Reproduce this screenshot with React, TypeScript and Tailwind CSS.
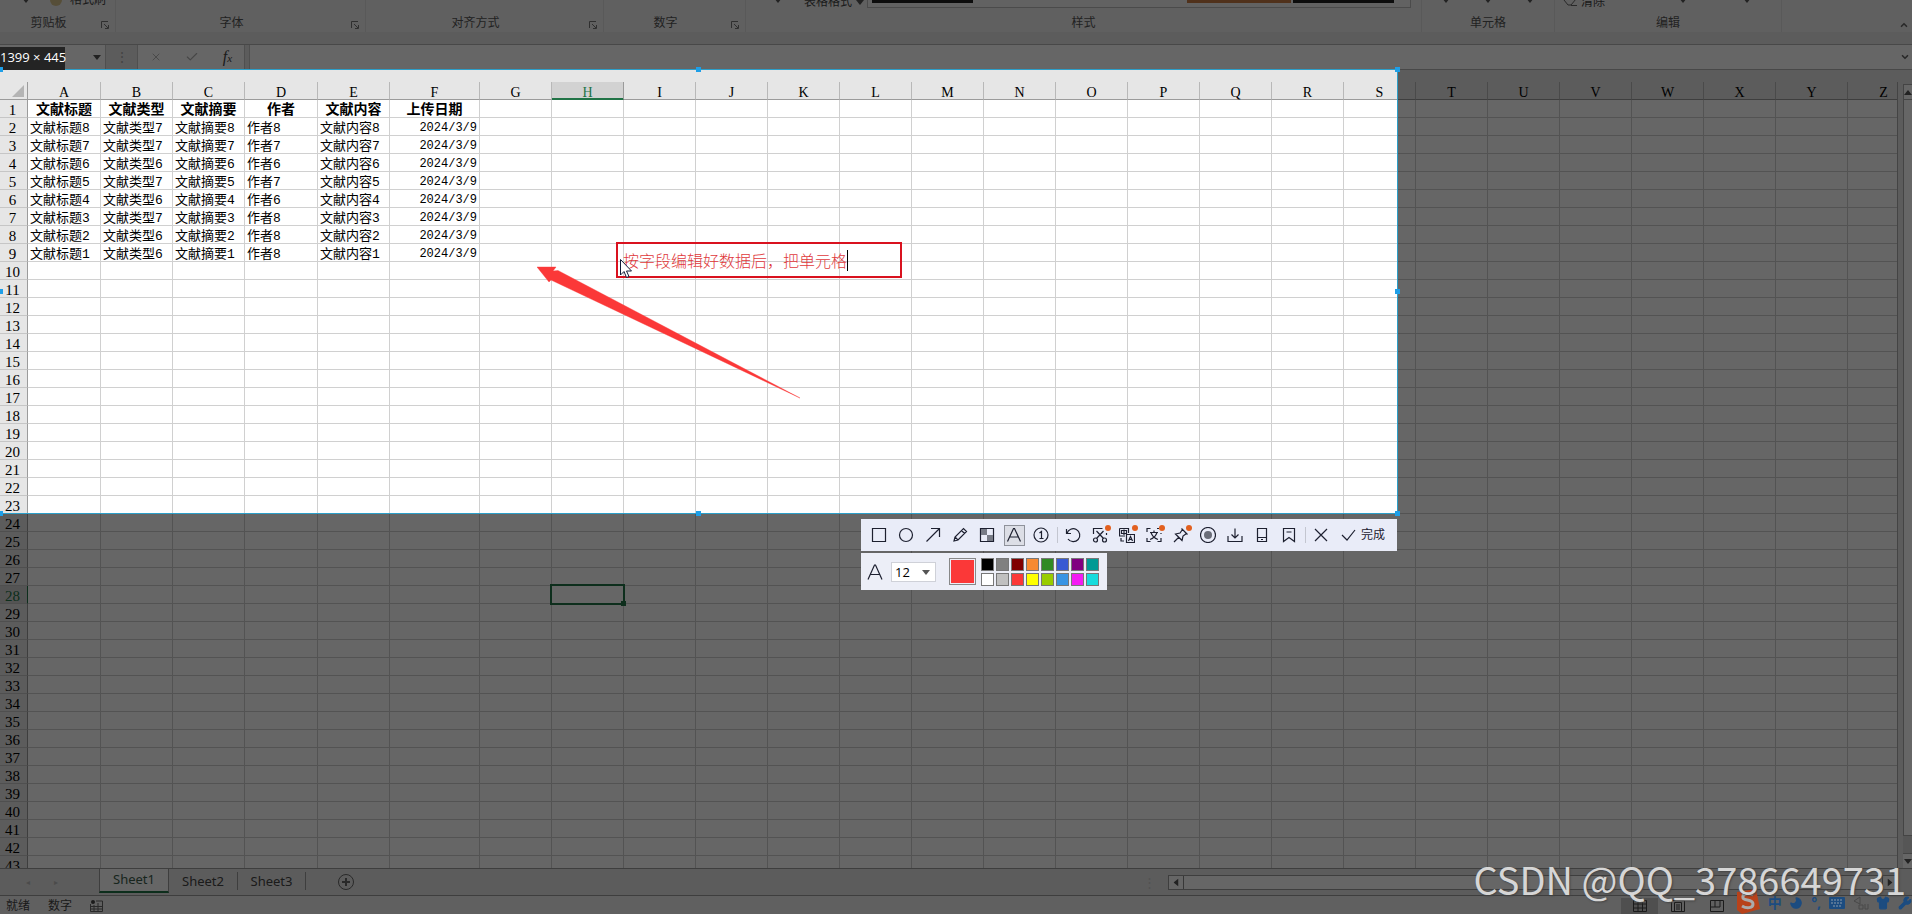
import type { ReactNode } from "react";
import { ChevronDown, ChevronUp, Check, Moon, Shirt, Wrench, X } from "lucide-react";

const columns = "ABCDEFGHIJKLMNOPQRSTUVWXYZ".split("");
const widths: Record<string, string> = { A: "w-[73px]", D: "w-[73px]", F: "w-[90px]" };

const fields = ["文献标题", "文献类型", "文献摘要", "作者", "文献内容", "上传日期"];
const records = [
  ["文献标题8", "文献类型7", "文献摘要8", "作者8", "文献内容8", "2024/3/9"],
  ["文献标题7", "文献类型7", "文献摘要7", "作者7", "文献内容7", "2024/3/9"],
  ["文献标题6", "文献类型6", "文献摘要6", "作者6", "文献内容6", "2024/3/9"],
  ["文献标题5", "文献类型7", "文献摘要5", "作者7", "文献内容5", "2024/3/9"],
  ["文献标题4", "文献类型6", "文献摘要4", "作者6", "文献内容4", "2024/3/9"],
  ["文献标题3", "文献类型7", "文献摘要3", "作者8", "文献内容3", "2024/3/9"],
  ["文献标题2", "文献类型6", "文献摘要2", "作者8", "文献内容2", "2024/3/9"],
  ["文献标题1", "文献类型6", "文献摘要1", "作者8", "文献内容1", "2024/3/9"],
];

const palette = [
  "bg-black", "bg-[#808080]", "bg-[#800000]", "bg-[#f78a32]", "bg-[#308a24]", "bg-[#385ad3]", "bg-[#800080]", "bg-[#009a94]",
  "bg-white", "bg-[#c0c0c0]", "bg-[#fb3838]", "bg-[#ffff00]", "bg-[#99cc00]", "bg-[#3894e4]", "bg-[#f31bf3]", "bg-[#16dcdd]",
];

const Caret = ({ className = "" }: { className?: string }) => (
  <svg viewBox="0 0 8 5" className={`h-[5px] w-2 shrink-0 ${className}`} fill="#555">
    <path d="M0 0h8L4 5z" />
  </svg>
);

function RibbonGroup({ label, className, launcher, children }: { label: string; className: string; launcher?: boolean; children?: ReactNode }) {
  return (
    <section className={`flex flex-col justify-end border-r border-[#dedede] ${className}`}>
      <div className="flex h-4 shrink-0 items-center text-xs leading-4">{children}</div>
      <div className="flex h-6 shrink-0 items-center pt-[6px] text-xs text-[#555]">
        <span className="flex-1 text-center">{label}</span>
        {launcher && (
          <button aria-label={`${label}设置`} className="w-[18px] pt-1 pl-1">
            <svg viewBox="0 0 8 8" className="size-2" fill="none" stroke="#777">
              <path d="M.5 7V.5H7M3 3l4 4M7.500 4v3.500H4" />
            </svg>
          </button>
        )}
      </div>
    </section>
  );
}

function Ribbon() {
  return (
    <header className="flex h-8 shrink-0 overflow-hidden bg-[#f0f0f0] text-[#444]">
      <RibbonGroup label="剪贴板" className="w-[116px]" launcher>
        <Caret className="ml-[22px]" />
        <span className="mr-2 ml-5 h-3 w-3 rounded-full bg-[#d8c48c]" />
        <button>格式刷</button>
      </RibbonGroup>
      <RibbonGroup label="字体" className="w-[250px]" launcher />
      <RibbonGroup label="对齐方式" className="w-[238px]" launcher />
      <RibbonGroup label="数字" className="w-[142px]" launcher />
      <RibbonGroup label="样式" className="min-w-0 flex-1">
        <Caret className="ml-7" />
        <button className="mr-[3px] ml-[22px] flex shrink-0 items-center gap-1 pt-1">
          表格格式
          <Caret />
        </button>
        <span className="mr-[10px] flex h-4 flex-1 items-center gap-[2px] border border-t-0 border-[#bcbcbc] bg-[#f4f4f4] px-1">
          <span className="h-[6px] w-[101px] bg-[#222]" />
          <span className="flex-1" />
          <span className="h-[6px] w-[104px] bg-[#c77b45]" />
          <span className="mr-3 h-[6px] w-[101px] bg-[#222]" />
        </span>
      </RibbonGroup>
      <RibbonGroup label="单元格" className="w-[133px]">
        <span className="flex gap-[34px] pl-5">
          <Caret /><Caret /><Caret />
        </span>
      </RibbonGroup>
      <RibbonGroup label="编辑" className="w-[227px]">
        <svg viewBox="0 0 14 10" className="mt-1 ml-2 h-[10px] w-[14px]" fill="none" stroke="#666">
          <path d="M1 3l4 5h3L13 2M8 8.500h6" />
        </svg>
        <button className="mr-[74px] ml-1 pt-1">清除</button>
        <Caret />
        <Caret className="ml-[56px]" />
      </RibbonGroup>
      <div className="flex w-[130px] items-end justify-end pr-[3px] pb-[2px]">
        <button aria-label="折叠功能区"><ChevronUp className="size-[10px]" strokeWidth={4} color="#666" /></button>
      </div>
    </header>
  );
}

function FormulaBar() {
  return (
    <div className="my-3 flex h-[26px] shrink-0 items-stretch border-y border-[#b4b4b4]">
      <label className="flex w-[106px] items-center border-r border-[#c6c6c6] bg-white pr-1">
        <input aria-label="名称框" className="w-0 flex-1 bg-transparent" />
        <Caret />
      </label>
      <span className="w-[31px] text-center text-sm leading-6 text-[#aaa]">⋮</span>
      <div className="flex w-[108px] items-center justify-around border-x border-[#c6c6c6] bg-white">
        <button aria-label="取消"><X className="size-3" color="#b8b8b8" /></button>
        <button aria-label="输入"><Check className="size-[14px]" color="#b0b0b0" /></button>
        <button aria-label="插入函数" className="font-['Liberation_Serif',serif] text-base leading-5 text-[#444] italic">
          f<span className="text-[11px]">x</span>
        </button>
      </div>
      <input aria-label="编辑栏" className="ml-1 min-w-0 flex-1 border-l border-[#c6c6c6] bg-white px-2" />
      <button aria-label="展开编辑栏" className="bg-white pr-[2px]"><ChevronDown className="size-[10px]" strokeWidth={4} color="#666" /></button>
    </div>
  );
}

function Sheet() {
  return (
    <div className="min-w-0 flex-1 overflow-hidden border-r border-[#ababab]">
      <table className="w-max table-fixed border-separate border-spacing-0 bg-white font-['Liberation_Mono','Noto_Sans_CJK_SC',monospace] text-[13px] text-black">
        <colgroup>
          <col className="w-7" />
          {columns.map((c) => <col key={c} className={widths[c] ?? "w-[72px]"} />)}
        </colgroup>
        <thead>
          <tr className="h-[18px] bg-[#e6e6e6] font-['Liberation_Serif',serif] text-sm leading-[13px]">
            <th className="border-r border-b border-[#9b9b9b] p-0">
              <svg viewBox="0 0 12 12" className="ml-3 size-3" fill="#b4b4b4"><path d="M12 0v12H0z" /></svg>
            </th>
            {columns.map((c) => (
              <th
                key={c}
                scope="col"
                className={`h-[18px] border-r border-b p-0 pt-1 font-normal ${c === "H" ? "border-r-[#9b9b9b] border-b-[#217346] bg-[#d2d2d2] text-[#217346] shadow-[inset_0_-1px_#217346]" : "border-r-[#b8b8b8] border-b-[#9b9b9b]"}`}
              >
                {c}
              </th>
            ))}
          </tr>
        </thead>
        <tbody>
          {Array.from({ length: 44 }, (_, i) => i + 1).map((row) => (
            <tr key={row} className="h-[18px]">
              <th
                scope="row"
                className={`h-[18px] border-r border-b border-b-[#c6c6c6] pt-1 pr-[2px] pb-0 pl-0 font-['Liberation_Serif',serif] text-[15px] leading-[13px] font-normal ${row === 28 ? "border-r-[#217346] bg-[#d2d2d2] text-[#217346]" : "border-r-[#9b9b9b] bg-[#e6e6e6]"}`}
              >
                {row}
              </th>
              {columns.map((c, i) => {
                const active = c === "H" && row === 28;
                const text = row === 1 ? fields[i] : records[row - 2]?.[i];
                const align = row === 1 ? "text-center text-sm leading-[13px] font-bold" : i === 5 ? "text-right text-xs leading-[13px]" : "text-left leading-[13px]";
                return (
                  <td
                    key={c}
                    className={`h-[18px] border-r border-b border-[#d0d0d0] px-[2px] pt-1 pb-0 whitespace-nowrap ${align} ${active ? "relative" : ""}`}
                  >
                    {text}
                    {active && (
                      <span className="absolute -inset-[2px] border-2 border-[#217346]">
                        <span className="absolute -right-[3px] -bottom-[3px] size-[5px] bg-[#217346]" />
                      </span>
                    )}
                  </td>
                );
              })}
            </tr>
          ))}
        </tbody>
      </table>
    </div>
  );
}

function VerticalScroll() {
  return (
    <div className="ml-[5px] flex w-[9px] shrink-0 flex-col overflow-hidden pt-[2px]">
      <button aria-label="向上滚动" className="flex h-4 items-center justify-center border border-r-0 border-[#ababab] bg-white">
        <Caret className="rotate-180" />
      </button>
      <span className="flex-1 border-l border-[#ababab] bg-white" />
      <span className="h-[19px] border-y border-[#ababab] bg-[#d8d8d8]" />
      <button aria-label="向下滚动" className="flex h-[14px] items-center justify-center bg-white"><Caret /></button>
    </div>
  );
}

function SheetTabs() {
  return (
    <nav className="flex h-7 shrink-0 items-start border-y border-[#9b9b9b] text-[13px] text-[#444]">
      <span className="flex w-[99px] gap-6 self-center pl-[26px] text-[8px] text-[#bbb]"><span>◂</span><span>▸</span></span>
      <button className="h-6 w-[70px] border-x border-b-2 border-x-[#9b9b9b] border-b-[#217346] bg-white text-[#3c5c4c]">Sheet1</button>
      <button className="my-[3px] h-[18px] w-[69px] border-r border-[#9b9b9b]">Sheet2</button>
      <button className="my-[3px] h-[18px] w-[68px] border-r border-[#9b9b9b]">Sheet3</button>
      <button aria-label="新工作表" className="mt-[5px] ml-8">
        <svg viewBox="0 0 16 16" className="size-4" fill="none" stroke="#666"><circle cx="8" cy="8" r="7.500" /><path d="M8 4v8M4 8h8" strokeWidth="2" /></svg>
      </button>
      <span className="ml-auto pt-1 pr-3 text-[#ccc]">⋮</span>
      <div className="mt-[6px] flex h-[15px] w-[730px] border border-[#9b9b9b] bg-white">
        <button aria-label="向左滚动" className="flex w-[15px] items-center justify-center border-r border-[#8a8a8a]"><Caret className="rotate-90" /></button>
        <span className="flex-1" />
        <button aria-label="向右滚动" className="flex w-[15px] items-center justify-center border-l border-[#8a8a8a]"><Caret className="-rotate-90" /></button>
      </div>
      <span className="w-[14px]" />
    </nav>
  );
}

function StatusBar() {
  return (
    <footer className="flex h-[18px] shrink-0 items-center bg-[#f0f0f0] pt-[2px] text-xs leading-4 text-[#444]">
      <span className="ml-[6px]">就绪</span>
      <span className="ml-[18px]">数字</span>
      <svg viewBox="0 0 13 12" className="ml-[18px] h-3 w-[13px]" fill="none" stroke="#666">
        <path d="M.5 4v7.500h12V1H6M1 6.500h11M1 9h11M4 5v6M8 3v8" /><circle cx="3" cy="2" r="2" fill="#444" stroke="none" />
      </svg>
      <div className="mr-[177px] ml-auto flex h-full items-center">
        <button aria-label="普通" className="flex h-full w-[37px] items-center justify-center bg-[#c6c6c6]">
          <svg viewBox="0 0 14 12" className="h-3 w-[14px]" fill="none" stroke="#444"><path d="M.5.5h13v11H.5zM5 0v12M9.500 0v12M0 4h14M0 8h14" /></svg>
        </button>
        <button aria-label="页面布局" className="flex w-[40px] justify-center">
          <svg viewBox="0 0 14 12" className="h-3 w-[14px]" fill="none" stroke="#444"><path d="M.5.5h13v11H.5zM3.500 2.500h7v9h-7zM5 5h4M5 7h4M5 9h4" /></svg>
        </button>
        <button aria-label="分页预览" className="flex w-[37px] justify-center">
          <svg viewBox="0 0 14 12" className="h-3 w-[14px]" fill="none" stroke="#444"><path d="M.5.5h13v11H.5zM5 0v7h5V0M1 7h4" /></svg>
        </button>
      </div>
    </footer>
  );
}

const tools: { name: string; art: ReactNode; badge?: boolean; active?: boolean }[] = [
  { name: "矩形", art: <path d="M1.500 1.500h13v13h-13z" /> },
  { name: "椭圆", art: <circle cx="8" cy="8" r="6.500" /> },
  { name: "箭头", art: <path d="M1.500 14.500l13-13M6 1.500h8.500V10" /> },
  { name: "画笔", art: <path d="M2 14l1-4 8.500-8.500 3 3L6 13zM9.500 3.500l3 3M3 10l3 3" /> },
  { name: "马赛克", art: <><path d="M1.500 1.500h13v13h-13z" /><path d="M2 2h6v6H2zM8 8h6v6H8z" fill="#777b86" stroke="none" /></> },
  { name: "文字", art: <path d="M1.500 14.500L7.500 1.500h1l6 13M4 10h8" />, active: true },
  { name: "序号", art: <><circle cx="8" cy="8" r="7" /><path d="M6.500 6L8.500 4.500v7M6.500 11.500h4" /></> },
  { name: "撤销", art: <path d="M1.500 2v4.500H6M2 6.500a6.500 6.500 0 1 1 1 5.500" /> },
  { name: "截长图", art: <><path d="M1.500 7V1.500h9M14.500 6v2" /><path d="M4.500 4l7 7.500M11.500 4l-7 7.500" /><circle cx="3.500" cy="13" r="2" /><circle cx="12.500" cy="13" r="2" /></>, badge: true },
  { name: "翻译", art: <><path d="M.5 1.500h9V6M.5 1.500V9H6M2.500 3.500h5v3h-5zM5 2.500V8M7.500 7.500h8v8h-8zM9.500 14l2-4.500 2 4.500M10 12.500h3M2 11v3h3" /></>, badge: true },
  { name: "文字识别", art: <path d="M1 5V1.500h3.500M15 11v3.500h-3.500M1 11v3.500h3.500M11 1.500h2M15 6v1M4 5.500h8M8 3.500v2M11 5.500c-1 3-4 6-7 7M5 5.500c1 3 4 6 7 7" />, badge: true },
  { name: "钉在桌面", art: <path d="M8.500 1.500l6 6M9.500 2.500L7 6 2.500 7l6.500 6.500L10 9l3.500-2.500M6 10l-5 5" />, badge: true },
  { name: "录屏", art: <><circle cx="8" cy="8" r="7.500" /><circle cx="8" cy="8" r="4" fill="#6a6d78" stroke="none" /></> },
  { name: "保存", art: <path d="M8 1.500V11M4.500 7.500L8 11l3.500-3.500M1 9v5.500h14V9" /> },
  { name: "发送到手机", art: <path d="M3.500 1.500h9v13h-9zM3.500 10.500h9M7 12.500h2" /> },
  { name: "收藏", art: <path d="M2.500 1.500h11v13L8 10.500l-5.500 4zM5.500 5h5" /> },
];

function ToolButton({ name, art, badge, active }: (typeof tools)[number]) {
  return (
    <button aria-label={name} className="relative flex w-[27px] justify-center">
      <span className={`flex size-[21px] items-center justify-center ${active ? "border border-[#8f929b] bg-[#dcdee6]" : ""}`}>
        <svg viewBox="0 0 16 16" className="size-4 shrink-0" fill="none" stroke="#1d2030" strokeWidth="1.200">{art}</svg>
      </span>
      {badge && <span className="absolute top-0 right-[3px] size-[6px] rounded-full bg-[#e2601f]" />}
    </button>
  );
}

function CaptureToolbar() {
  return (
    <div className="absolute top-full right-0 mt-[6px] flex flex-col items-start gap-[2px]">
      <div role="toolbar" aria-label="截图工具" className="flex h-8 items-center bg-[#e9ecf8] pr-3 pl-[5px]">
        {tools.slice(0, 7).map((t) => <ToolButton key={t.name} {...t} />)}
        <span className="mx-[2px] h-4 w-px bg-[#c3c6d0]" />
        {tools.slice(7).map((t) => <ToolButton key={t.name} {...t} />)}
        <span className="mx-[2px] h-4 w-px bg-[#c3c6d0]" />
        <button aria-label="取消截图" className="flex w-[27px] justify-center">
          <svg viewBox="0 0 14 14" className="size-[14px]" fill="none" stroke="#1d2030" strokeWidth="1.200"><path d="M1 1l12 12M13 1L1 13" /></svg>
        </button>
        <button className="flex items-center gap-[5px] pl-[6px] text-xs text-[#1d2030]">
          <svg viewBox="0 0 15 12" className="h-3 w-[15px]" fill="none" stroke="#1d2030" strokeWidth="1.200"><path d="M1 6l5 5L14 1" /></svg>
          完成
        </button>
      </div>
      <div className="flex h-[37px] items-center bg-[#eceef7] pr-2 pl-[6px]">
        <svg viewBox="0 0 16 16" className="size-4" fill="none" stroke="#1d2030" strokeWidth="1.200"><path d="M1 15.500L7.500 1h1L15 15.500M3.500 10.500h9" /></svg>
        <div className="relative ml-2 h-5 w-[45px] border border-[#cfd1d8] bg-white">
          <select aria-label="字号" className="block h-[18px] w-full appearance-none pl-[3px] font-['Open_Sans',sans-serif] text-[13px] leading-[18px] text-black">
            <option>12</option>
          </select>
          <Caret className="absolute top-[7px] right-[5px]" />
        </div>
        <button aria-label="当前颜色" className="ml-[13px] size-[27px] border border-[#888] bg-[#fb3838] shadow-[inset_0_0_0_1px_#eceef7]" />
        <div className="ml-[5px] grid grid-cols-8 gap-[2px]">
          {palette.map((color) => (
            <button key={color} aria-label="颜色" className={`size-[13px] border border-[#777] ${color}`} />
          ))}
        </div>
      </div>
    </div>
  );
}

const handles = [
  "-left-[2px] -top-[3px]",
  "left-1/2 -ml-[3px] -top-[3px]",
  "-right-[3px] -top-[3px]",
  "-left-[2px] top-1/2 -mt-[3px]",
  "-right-[3px] top-1/2 -mt-[3px]",
  "-left-[2px] -bottom-[3px]",
  "left-1/2 -ml-[3px] -bottom-[3px]",
  "-right-[3px] -bottom-[3px]",
];

// Captured region: everything outside it is dimmed by the shadow
function Capture() {
  return (
    <div className="absolute top-[69px] left-0 h-[445px] w-[1398px] border border-l-0 border-[#2c9fc9] shadow-[0_0_0_2000px_rgba(0,0,0,0.6)]">
      <div className="absolute bottom-full left-0 h-[23px] w-[65px] bg-[#242424] font-['Open_Sans',sans-serif] text-[13px] leading-[21px] whitespace-nowrap text-white">1399 × 445</div>
      {handles.map((h) => <span key={h} className={`absolute size-[5px] bg-[#1e9fe8] ${h}`} />)}

      <svg viewBox="537 266 264 133" className="absolute top-[196px] left-[537px] h-[133px] w-[264px]" fill="#fb3838">
        <path d="M537 267l19 0-3 4 5-.5L800 398 551 280l-2 2z" stroke="#fb3838" strokeWidth=".4" />
      </svg>

      <label className="absolute top-[172px] left-[616px] flex h-9 w-[286px] items-center border-2 border-[#d9121f] pl-[5px]">
        <input aria-label="标注文字" readOnly value="按字段编辑好数据后，把单元格" className="h-6 w-[224px] bg-transparent font-['Noto_Sans_CJK_SC',sans-serif] text-base font-light text-[#e0393c]" />
        <span className="h-[21px] w-px bg-black" />
      </label>
      <svg viewBox="0 0 12 19" className="absolute top-[189px] left-[620px] h-[19px] w-3" fill="#fff" stroke="#111c38">
        <path d="M.5.5v15.500l3.500-3.500 2.500 6 2.500-1-2.500-5.500h5z" />
      </svg>

      <CaptureToolbar />
    </div>
  );
}

function ImeBar() {
  return (
    <div className="absolute right-0 bottom-0 flex h-[26px] w-[178px] items-center justify-between overflow-hidden pt-1 text-[#1c4c80]">
      <svg viewBox="0 0 26 26" className="-mt-1 size-[26px] shrink-0"><path d="M3 4l19-3 4 20-18 5-5-4z" fill="#b8421a" /><path d="M19 7c-6-3-11-1-10 3 1 3 10 1 10 6 0 4-6 5-11 2" fill="none" stroke="#aaa" strokeWidth="3" /></svg>
      <span className="text-sm font-bold">中</span>
      <Moon className="size-[14px] -scale-x-100" fill="currentColor" />
      <span className="text-sm font-bold">°,</span>
      <svg viewBox="0 0 16 12" className="h-3 w-4"><rect width="16" height="12" rx="1" fill="currentColor" /><path d="M2 3h12M2 6h12M4 9h8" stroke="#8a9aaa" strokeDasharray="2 1" /></svg>
      <svg viewBox="0 0 16 14" className="h-[14px] w-4" fill="none" stroke="#484848"><path d="M1 5l6-4v7zM6 9h4v4H6zM12 8v5h3V8" /></svg>
      <Shirt className="size-[14px]" fill="currentColor" />
      <Wrench className="size-[14px]" fill="currentColor" />
    </div>
  );
}

export default function App() {
  return (
    <main className="relative flex h-screen flex-col overflow-hidden bg-[#e6e6e6] font-['Noto_Sans','Noto_Sans_CJK_SC',sans-serif]">
      <Ribbon />
      <FormulaBar />
      <div className="flex min-h-0 flex-1">
        <Sheet />
        <VerticalScroll />
      </div>
      <SheetTabs />
      <StatusBar />
      <Capture />
      <ImeBar />
      <p className="pointer-events-none absolute right-[6px] bottom-[7px] font-['Noto_Sans_CJK_SC',sans-serif] text-[38px] leading-[56px] text-[#d6d6d6] [text-shadow:1px_1px_2px_#444]">
        CSDN @QQ_3786649731
      </p>
    </main>
  );
}
